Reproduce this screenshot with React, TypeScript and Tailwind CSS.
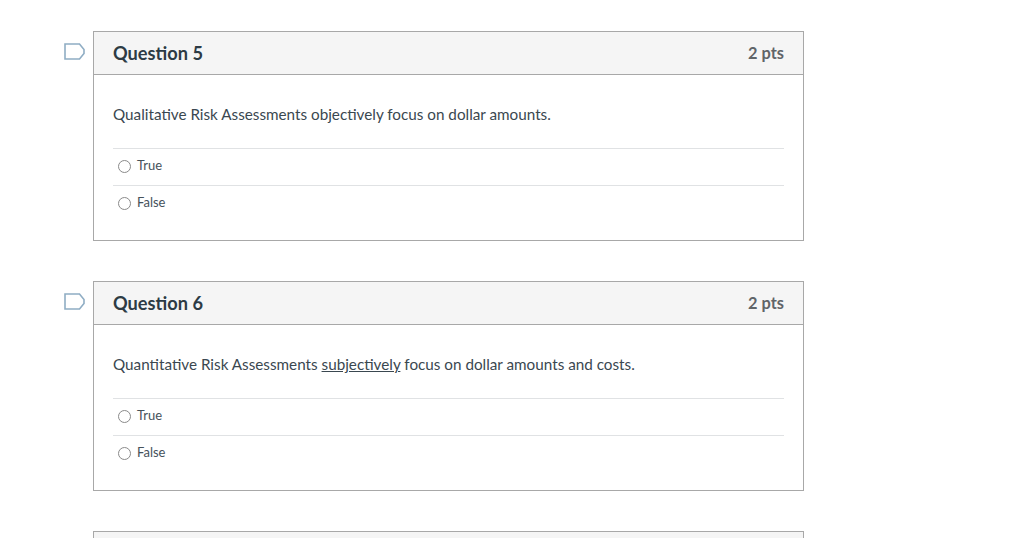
const QUESTIONS = [
  { id: 5, text: <>Qualitative Risk Assessments objectively focus on dollar amounts.</> },
  {
    id: 6,
    text: (
      <>
        Quantitative Risk Assessments <span className="underline">subjectively</span> focus on dollar amounts and costs.
      </>
    ),
  },
];

function FlagIcon() {
  return (
    <svg width="22" height="18" viewBox="0 0 22 18" fill="none" className="absolute left-[-30px] top-[11px]">
      <path d="M1 1H15.5L20 6.5V10.5L15.5 16H1Z" stroke="#8fadc4" strokeWidth="1.6" />
    </svg>
  );
}

function Answer({ label }: { label: string }) {
  return (
    <div className="flex h-[37px] items-start border-t border-[#e0e2e4]">
      <span className="ml-[5px] mt-[11px] h-[13px] w-[13px] rounded-full border border-[#8a8a8a] bg-white" />
      <span className="ml-[6px] mt-[7px] text-[13px] leading-[18px] text-[#46525b]">{label}</span>
    </div>
  );
}

function Question({ id, text }: { id: number; text: React.ReactNode }) {
  return (
    <div className="relative h-[210px] w-[711px] border border-[#a8a8a8] bg-white">
      <FlagIcon />
      <div className="flex h-[43px] items-center justify-between border-b border-[#a8a8a8] bg-[#f5f5f5] px-[19px]">
        <h2 className="text-[18.2px] leading-[28px] font-bold text-[#2d3b45]">Question {id}</h2>
        <span className="text-[16.4px] leading-[28px] font-bold text-[#5f6468]">2 pts</span>
      </div>
      <div className="px-[19px] pt-[29px]">
        <p className="text-[15.25px] leading-[20px] text-[#3a4750]">{text}</p>
        <div className="mt-[24px]">
          <Answer label="True" />
          <Answer label="False" />
        </div>
      </div>
    </div>
  );
}

export default function App() {
  return (
    <div className="h-[538px] overflow-hidden bg-white pl-[93px] pt-[31px] font-['Lato','Noto_Sans',sans-serif]">
      <div className="flex flex-col gap-[40px]">
        {QUESTIONS.map((q) => (
          <Question key={q.id} id={q.id} text={q.text} />
        ))}
        <div className="h-[43px] w-[711px] border border-[#a8a8a8] bg-[#f5f5f5]" />
      </div>
    </div>
  );
}
